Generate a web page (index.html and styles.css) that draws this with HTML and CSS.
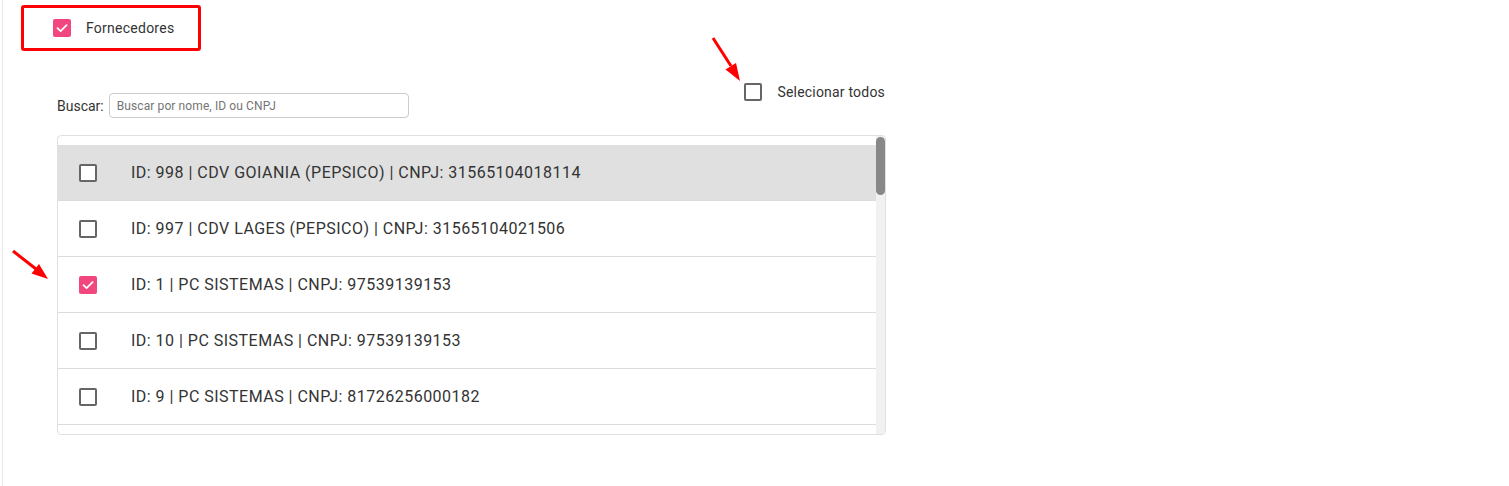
FILE: index.html
```html
<!DOCTYPE html>
<html lang="pt-BR">
<head>
    <meta charset="UTF-8">
    <meta name="viewport" content="width=device-width, initial-scale=1.0">
    <title>Fornecedores</title>
    <link rel="stylesheet" href="styles.css">
</head>
<body>
    <div class="page">
        <div class="section-title">
            <span class="check checked"><svg viewBox="0 0 18 18"><path d="M4.5 9.2 L7.6 12.2 L13.6 6.2" /></svg></span>
            <span>Fornecedores</span>
        </div>

        <div class="panel">
            <div class="toolbar">
                <div class="search">
                    <label for="busca">Buscar:</label>
                    <input type="text" id="busca" placeholder="Buscar por nome, ID ou CNPJ">
                </div>
                <div class="select-all">
                    <span class="check"></span>
                    <span>Selecionar todos</span>
                </div>
            </div>

            <div class="list">
                <div class="items">
                    <div class="row active"><span class="check"></span><span>ID: 998 | CDV GOIANIA (PEPSICO) | CNPJ: 31565104018114</span></div>
                    <div class="row"><span class="check"></span><span>ID: 997 | CDV LAGES (PEPSICO) | CNPJ: 31565104021506</span></div>
                    <div class="row"><span class="check checked"><svg viewBox="0 0 18 18"><path d="M4.5 9.2 L7.6 12.2 L13.6 6.2" /></svg></span><span>ID: 1 | PC SISTEMAS | CNPJ: 97539139153</span></div>
                    <div class="row"><span class="check"></span><span>ID: 10 | PC SISTEMAS | CNPJ: 97539139153</span></div>
                    <div class="row"><span class="check"></span><span>ID: 9 | PC SISTEMAS | CNPJ: 81726256000182</span></div>
                    <div class="row"></div>
                </div>
                <div class="scrollbar"><div class="thumb"></div></div>
            </div>
        </div>

        <svg class="marks" viewBox="0 0 1509 486">
            <line x1="713" y1="38" x2="731" y2="66" />
            <polygon points="740,81 725.5,69.5 736,63" />
            <line x1="13" y1="251" x2="36" y2="269" />
            <polygon points="48,279 31.5,273.5 39,264" />
        </svg>
    </div>
</body>
</html>
```

FILE: styles.css
```css
* { margin: 0; padding: 0; box-sizing: border-box; font-family: Roboto, "Liberation Sans", Arial, sans-serif; }
body { background-color: #fff; color: #333; }
.page { position: relative; min-height: 486px; margin-left: 2px; border-left: 1px solid #e8e8e8; padding: 5px 0 0 18px; }

.section-title { display: flex; align-items: center; gap: 15px; width: 180px; height: 46px; padding-left: 29px; border: 3px solid #f00; border-radius: 3px; font-size: 14px; letter-spacing: 0.25px; color: #333; }

.check { display: inline-block; flex: none; width: 18px; height: 18px; border: 2px solid #666; border-radius: 2px; background-color: #fff; }
.check.checked { border: none; background-color: #f2467f; }
.check svg { display: block; width: 18px; height: 18px; }
.check svg path { fill: none; stroke: #fff; stroke-width: 1.8; stroke-linecap: round; stroke-linejoin: round; }

.panel { width: 829px; margin-left: 36px; }
.toolbar { display: flex; justify-content: space-between; align-items: flex-start; }
.search { display: flex; align-items: center; gap: 5px; margin-top: 42px; font-size: 14px; color: #333; }
.search input { width: 300px; height: 25px; padding: 0 7px; border: 1px solid #ccc; border-radius: 4px; font-size: 12px; letter-spacing: 0.1px; color: #333; outline: none; }
.search input::placeholder { color: #757575; }
.select-all { display: flex; align-items: center; gap: 15px; margin-top: 32px; margin-right: 1px; font-size: 14px; letter-spacing: 0.2px; color: #333; }

.list { display: flex; height: 300px; margin-top: 17px; border: 1px solid #e0e0e0; border-radius: 4px; overflow: hidden; }
.items { flex: 1; padding-top: 9px; overflow: hidden; }
.row { display: flex; align-items: center; gap: 34px; height: 56px; padding-left: 21px; border-bottom: 1px solid #dcdcdc; font-size: 16px; letter-spacing: 0.48px; color: #333; }
.row.active { background-color: #e0e0e0; }
.scrollbar { flex: none; width: 9px; padding-top: 1px; background-color: #f1f1f1; }
.thumb { height: 58px; border-radius: 5px; background-color: #888; }

.marks { position: absolute; top: 0; left: -3px; width: 1509px; height: 486px; pointer-events: none; }
.marks line { stroke: #f00; stroke-width: 3; }
.marks polygon { fill: #f00; }
```
